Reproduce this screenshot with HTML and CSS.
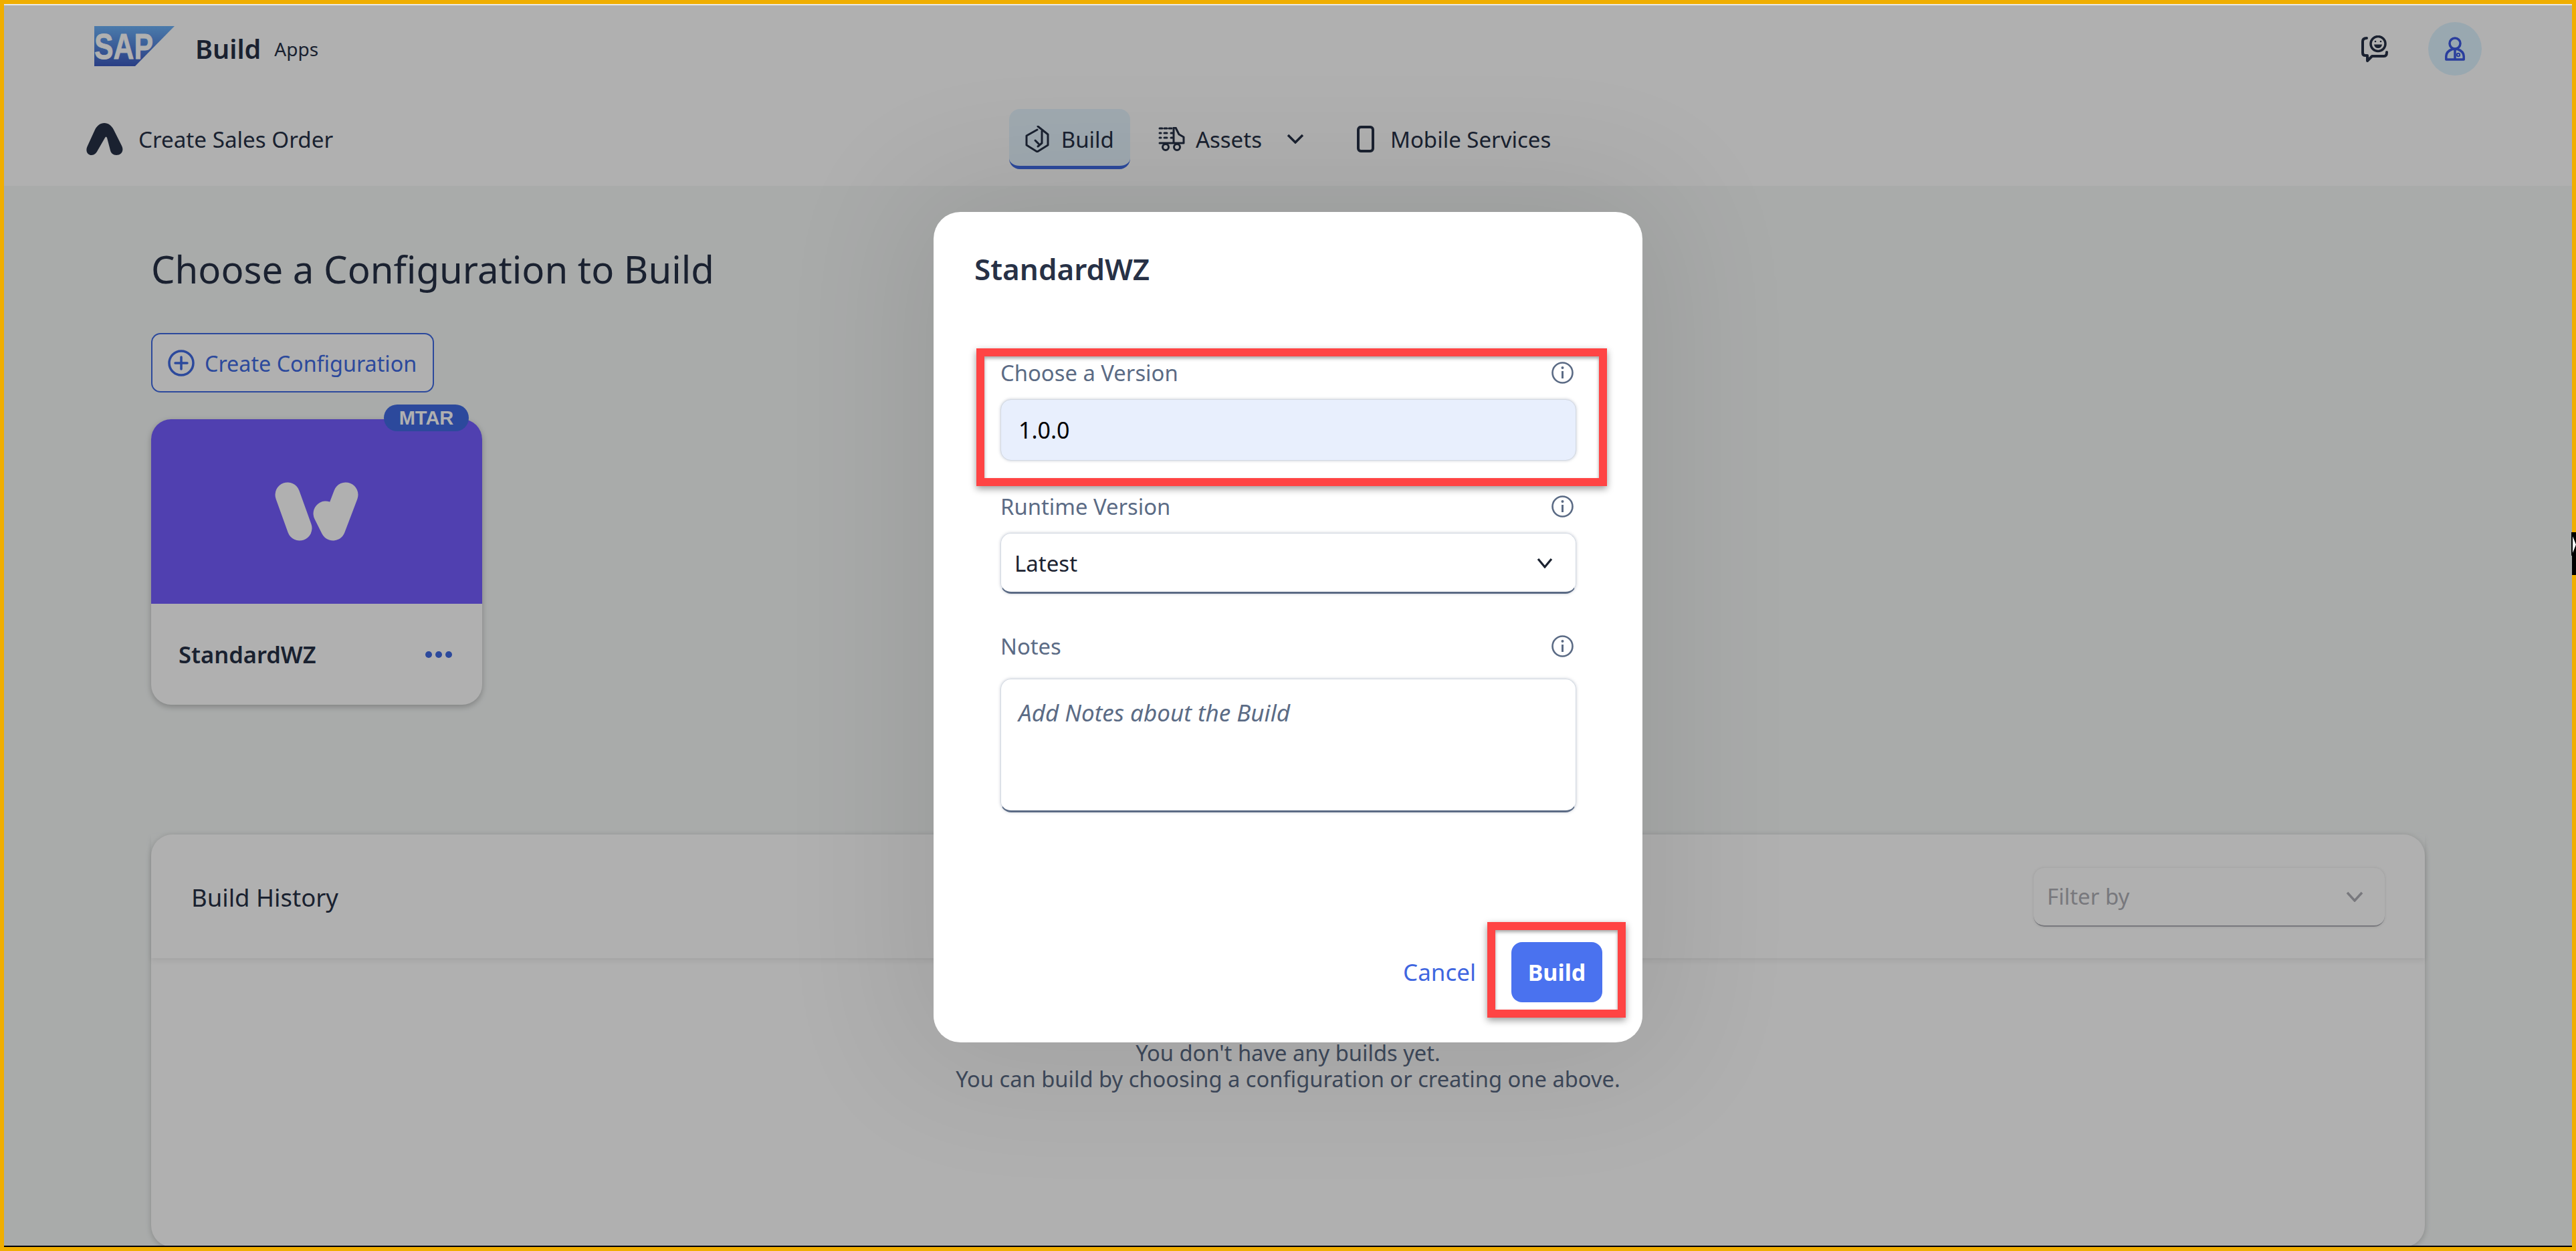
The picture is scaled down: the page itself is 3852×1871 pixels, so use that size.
FILE: index.html
```html
<!DOCTYPE html>
<html lang="en">
<head>
<meta charset="utf-8">
<title>SAP Build Apps</title>
<link rel="stylesheet" href="styles.css">
</head>
<body>
<div class="frame">
  <div class="topline"></div>
  <main class="app">
    <header class="header">
      <div class="topbar">
        <div class="brand">
          <svg class="sap-logo" viewBox="0 0 120 60">
            <defs><linearGradient id="sapg" x1="0" y1="0" x2="0" y2="1"><stop offset="0" stop-color="#6db2f8"/><stop offset="1" stop-color="#3d5bc1"/></linearGradient></defs>
            <polygon points="0,0 120,0 61,60 0,60" fill="url(#sapg)"/>
            <text class="sap-text" x="0" y="49" textLength="88" lengthAdjust="spacingAndGlyphs">SAP</text>
          </svg>
          <span class="brand-build">Build</span>
          <span class="brand-apps">Apps</span>
        </div>
        <div class="actions">
          <svg class="icon-feedback" viewBox="0 0 40 40" fill="none" stroke="#273146" stroke-width="4" stroke-linecap="round" stroke-linejoin="round">
            <path d="M8 4 Q2 4 2 9 V26 Q2 30 6 30 H9 V38 L16 31 H34 Q38 31 38 25"/>
            <circle cx="25" cy="12.500" r="11" stroke-width="3.500"/>
            <path d="M19 13.500 H31 Q30 19 25 19 Q20 19 19 13.500Z" fill="#273146" stroke="none"/>
            <circle cx="21" cy="9" r="1.300" fill="#273146" stroke="none"/>
            <circle cx="29" cy="9" r="1.300" fill="#273146" stroke="none"/>
          </svg>
          <div class="avatar">
            <svg class="icon-user" viewBox="0 0 30 36" fill="none" stroke="#3d5be4" stroke-width="3.500" stroke-linejoin="round">
              <circle cx="15" cy="10" r="8"/>
              <path d="M1.800 34 V29 Q2 22 11 18.500 H19 Q28 22 28.200 29 V34Z"/>
              <path d="M15 17 V34"/>
              <circle cx="20" cy="27" r="2.200" stroke-width="2"/>
            </svg>
          </div>
        </div>
      </div>
      <div class="subbar">
        <div class="app-name">
          <svg class="icon-a" viewBox="0 0 55 48"><path d="M27 0 C33 0 38 4 41 10 L53 34 C57 42 52 48 45 48 C40 48 37 45 36 41 L31 22 Q29.500 19 28 22 L17 41 C15 45 12 48 8 48 C2 48 -2 42 2 34 L13 10 C16 4 21 0 27 0Z" fill="#273146"/></svg>
          <span>Create Sales Order</span>
        </div>
        <nav class="nav">
          <div class="nav-item nav-active">
            <svg class="icon-build" viewBox="0 0 38 40" fill="none" stroke="#273146" stroke-width="3" stroke-linecap="round" stroke-linejoin="round">
              <path d="M18 6 L2 15 V29 L18 39 L34 29 V13 L19 1"/>
              <path d="M25 8 V26 L19 31"/>
              <path d="M15 22 L20 27" stroke-width="3"/>
            </svg>
            <span>Build</span>
          </div>
          <div class="nav-item">
            <svg class="icon-assets" viewBox="0 0 40 36" fill="none" stroke="#273146" stroke-width="3" stroke-linecap="round" stroke-linejoin="round">
              <path d="M2 2 H22 M2 9 H4 M9 9 H14 M19 9 H22 M2 16 H4 M9 16 H14 M19 16 H22" stroke-dasharray="4 3"/>
              <path d="M2 24 H38 V15 L31 11 L26 1 H23 V24"/>
              <circle cx="11" cy="30" r="4.500"/>
              <circle cx="28" cy="30" r="4.500"/>
            </svg>
            <span>Assets</span>
            <svg class="icon-nav-chevron" viewBox="0 0 26 14" fill="none" stroke="#273146" stroke-width="3.500"><path d="M2 1 L13 12 L24 1"/></svg>
          </div>
          <div class="nav-item">
            <svg class="icon-mobile" viewBox="0 0 26 40" fill="none" stroke="#273146" stroke-width="4"><rect x="2" y="2" width="22" height="36" rx="4"/></svg>
            <span>Mobile Services</span>
          </div>
        </nav>
        <div></div>
      </div>
    </header>

    <section class="content">
      <h1 class="page-title">Choose a Configuration to Build</h1>
      <div class="create-btn">
        <svg class="icon-plus" viewBox="0 0 40 40" fill="none" stroke="#406be2" stroke-width="3.500" stroke-linecap="round"><circle cx="20" cy="20" r="18"/><path d="M20 11 V29 M11 20 H29"/></svg>
        <span>Create Configuration</span>
      </div>
      <article class="card">
        <span class="badge">MTAR</span>
        <div class="card-img">
          <svg class="icon-w" viewBox="0 0 126 88" fill="none" stroke="#fff" stroke-width="37" stroke-linecap="round" stroke-linejoin="round">
            <path d="M19 19 L37 69"/>
            <path d="M76 47 L87 69 L106 19"/>
          </svg>
        </div>
        <div class="card-foot">
          <span class="card-name">StandardWZ</span>
          <span class="dots"><i></i><i></i><i></i></span>
        </div>
      </article>
      <section class="history">
        <div class="history-head">
          <h2 class="history-title">Build History</h2>
          <div class="filter">
            <span>Filter by</span>
            <svg class="icon-chevron" viewBox="0 0 26 16" fill="none" stroke="#aeafb5" stroke-width="3.500"><path d="M2 2 L13 14 L24 2"/></svg>
          </div>
        </div>
        <div class="history-body">
          <p>You don't have any builds yet.</p>
          <p>You can build by choosing a configuration or creating one above.</p>
        </div>
      </section>
    </section>

    <div class="overlay">
      <div class="dialog">
        <h2 class="dialog-title">StandardWZ</h2>
        <div class="form">
          <div class="field">
            <div class="label-row"><label>Choose a Version</label>
              <svg class="icon-info" viewBox="0 0 33 33" fill="none" stroke="#5b6b85" stroke-width="2.600"><circle cx="16.500" cy="16.500" r="15"/><path d="M16.500 14 V25" stroke-width="3"/><circle cx="16.500" cy="9" r="2" fill="#5b6b85" stroke="none"/></svg>
            </div>
            <div class="control control-filled">1.0.0</div>
          </div>
          <div class="field">
            <div class="label-row"><label>Runtime Version</label>
              <svg class="icon-info" viewBox="0 0 33 33" fill="none" stroke="#5b6b85" stroke-width="2.600"><circle cx="16.500" cy="16.500" r="15"/><path d="M16.500 14 V25" stroke-width="3"/><circle cx="16.500" cy="9" r="2" fill="#5b6b85" stroke="none"/></svg>
            </div>
            <div class="control control-select"><span>Latest</span>
              <svg class="icon-select" viewBox="0 0 24 16" fill="none" stroke="#1b2230" stroke-width="3.200"><path d="M2 2 L12 14 L22 2"/></svg>
            </div>
          </div>
          <div class="field field-notes">
            <div class="label-row"><label>Notes</label>
              <svg class="icon-info" viewBox="0 0 33 33" fill="none" stroke="#5b6b85" stroke-width="2.600"><circle cx="16.500" cy="16.500" r="15"/><path d="M16.500 14 V25" stroke-width="3"/><circle cx="16.500" cy="9" r="2" fill="#5b6b85" stroke="none"/></svg>
            </div>
            <div class="control control-area">Add Notes about the Build</div>
          </div>
        </div>
        <div class="dialog-foot">
          <span class="cancel">Cancel</span>
          <span class="primary">Build</span>
        </div>
        <div class="mark mark-version"></div>
        <div class="mark mark-build"></div>
      </div>
    </div>
  </main>
  <div class="bottomline"></div>
  <div class="cursor"><span class="cursor-arrow"></span></div>
</div>
</body>
</html>
```

FILE: styles.css
```css
* { box-sizing: border-box; }
html, body { margin: 0; padding: 0; }
body { font-family: "Noto Sans", "Open Sans", sans-serif; color: #273146; background: #fff; }

.frame {
  position: relative;
  width: 3852px;
  height: 1871px;
  border: 6px solid #f0ae00;
  display: flex;
  flex-direction: column;
}
.topline { height: 2px; background: #e8e8e8; flex: none; }
.bottomline { height: 2px; background: #000; flex: none; }
.app { position: relative; flex: 1; overflow: hidden; background: #f5f8f7; min-height: 0; }

/* header */
.header { background: #fff; height: 270px; }
.topbar {
  height: 105px;
  padding: 25px 135px 0;
  display: flex;
  justify-content: space-between;
  align-items: flex-start;
}
.brand { display: flex; align-items: center; height: 80px; }
.sap-logo { width: 120px; height: 60px; margin: 0 31px 8px 0; }
.sap-text { font-family: "Liberation Sans", sans-serif; font-size: 53px; font-weight: 700; fill: #fff; stroke: #fff; stroke-width: .8px; }
.brand-build { font-size: 39.500px; font-weight: 600; margin-right: 20px; }
.brand-apps { font-size: 28px; }
.actions { display: flex; align-items: center; gap: 60px; }
.icon-feedback { width: 40px; height: 40px; margin-top: 0; }
.avatar { width: 80px; height: 80px; border-radius: 50%; background: #def3ff; display: flex; align-items: center; justify-content: center; }
.icon-user { width: 30px; height: 36px; }

.subbar {
  padding: 50px 123px 0;
  display: grid;
  grid-template-columns: 1fr auto 1fr;
  align-items: start;
}
.app-name { display: flex; align-items: center; gap: 23px; height: 90px; font-size: 33.200px; }
.icon-a { width: 55px; height: 48px; }
.nav { display: flex; gap: 18px; font-size: 33px; }
.nav-item { display: flex; align-items: center; gap: 16px; height: 90px; padding: 0 24px; border-radius: 16px; }
.nav-active { background: #e6f5ff; border-bottom: 5px solid #406be2; padding-top: 5px; }
.icon-build { width: 38px; height: 40px; }
.icon-assets { width: 40px; height: 36px; }
.icon-nav-chevron { width: 26px; height: 14px; margin: 0 13px 0 21px; }
.icon-mobile { width: 26px; height: 40px; margin-right: 8px; }

/* content */
.content { padding: 86px 220px 0; }
.page-title { margin: 0; font-size: 56.300px; line-height: 76px; font-weight: 400; }
.create-btn {
  margin-top: 58px;
  width: 423px;
  height: 89px;
  padding-left: 23px;
  display: flex;
  align-items: center;
  gap: 15px;
  border: 2px solid #406be2;
  border-radius: 14px;
  background: #fff;
  color: #406be2;
  font-size: 32.300px;
  white-space: nowrap;
}
.icon-plus { width: 40px; height: 40px; flex: none; }

.card {
  position: relative;
  margin-top: 40px;
  width: 495px;
  height: 427px;
  border-radius: 30px;
  background: #fff;
  box-shadow: 0 3px 10px rgba(0,0,0,.25);
}
.badge {
  position: absolute;
  top: -22px;
  right: 20px;
  width: 127px;
  height: 40px;
  border-radius: 20px;
  background: #406be2;
  color: #fff;
  font-family: "Liberation Sans", sans-serif;
  font-size: 29px;
  font-weight: 700;
  line-height: 40px;
  text-align: center;
}
.card-img {
  height: 276px;
  border-radius: 30px 30px 0 0;
  background: #745dff;
  display: flex;
  align-items: center;
  justify-content: center;
}
.icon-w { width: 126px; height: 88px; }
.card-foot { height: 151px; padding: 0 45px 0 41px; display: flex; align-items: center; justify-content: space-between; }
.card-name { font-size: 34.500px; font-weight: 600; }
.dots { display: flex; gap: 5px; }
.dots i { width: 10px; height: 10px; border-radius: 50%; background: #406be2; }

.history {
  margin-top: 194px;
  height: 617px;
  border-radius: 32px;
  background: #fff;
  box-shadow: 0 2px 10px rgba(0,0,0,.2);
}
.history-head {
  height: 185px;
  padding: 2px 60px 0;
  display: flex;
  align-items: center;
  justify-content: space-between;
  box-shadow: 0 4px 8px rgba(0,0,0,.07);
}
.history-title { margin: 0; font-size: 36.500px; font-weight: 400; }
.filter {
  width: 525px;
  height: 88px;
  padding: 0 32px 0 20px;
  display: flex;
  align-items: center;
  justify-content: space-between;
  border-radius: 16px;
  border-bottom: 2px solid #aeafb5;
  box-shadow: 0 0 4px rgba(0,0,0,.12);
  color: #aeafb5;
  font-size: 33px;
}
.icon-chevron { width: 26px; height: 16px; }
.history-body { padding-top: 122px; text-align: center; color: #5b6b85; font-size: 32.700px; line-height: 39px; }
.history-body p { margin: 0; }

/* dialog */
.overlay {
  position: absolute;
  inset: 0;
  background: rgba(0,0,0,.31);
  display: flex;
  align-items: center;
  justify-content: center;
}
.dialog {
  position: relative;
  width: 1060px;
  height: 1242px;
  margin-top: 4px;
  padding: 57px 60px 60px;
  border-radius: 40px;
  background: #fff;
  box-shadow: 0 0 200px 40px rgba(0,0,0,.09);
  display: flex;
  flex-direction: column;
}
.dialog-title { margin: 0 0 106px 1px; font-size: 44px; line-height: 56px; font-weight: 600; }
.form { padding: 0 39px 0 40px; display: flex; flex-direction: column; gap: 47px; }
.label-row { height: 44px; margin-bottom: 17px; padding-right: 4px; display: flex; align-items: center; justify-content: space-between; color: #5b6b85; font-size: 32.800px; }
.icon-info { width: 33px; height: 33px; }
.field-notes { margin-top: 10px; }
.field-notes .label-row { margin-bottom: 26px; }
.control {
  border-radius: 16px;
  border: 1px solid #d3d9e2;
  box-shadow: 0 0 4px rgba(91,107,133,.35);
  font-size: 33px;
  display: flex;
  align-items: center;
  justify-content: space-between;
}
.control-filled { height: 92px; padding: 0 26px; background: #e8effd; color: #000; font-size: 34px; }
.control-select { height: 91px; padding: 2px 34px 0 20px; color: #1b2230; border-bottom: 3px solid #5b6b85; }
.icon-select { width: 24px; height: 16px; }
.control-area { height: 200px; padding: 26px 26px; align-items: flex-start; font-style: italic; font-size: 35px; color: #5b6b85; border-bottom: 3px solid #5b6b85; }
.dialog-foot { margin-top: auto; display: flex; align-items: center; justify-content: flex-end; gap: 53px; font-size: 35px; }
.cancel { color: #3f66e0; }
.primary {
  width: 136px;
  height: 90px;
  border-radius: 16px;
  background: #4a72ef;
  color: #fff;
  font-size: 34px;
  font-weight: 700;
  line-height: 90px;
  text-align: center;
}
.mark {
  position: absolute;
  border: 12px solid #ff4444;
  box-shadow: 0 4px 10px rgba(0,0,0,.4), inset 0 3px 5px rgba(0,0,0,.35);
}
.mark-version { left: 64px; top: 204px; width: 943px; height: 206px; }
.mark-build { left: 828px; top: 1062px; width: 207px; height: 143px; }

/* captured mouse cursor on the window edge */
.cursor { position: absolute; top: 790px; right: -6px; width: 6px; height: 64px; background: #000; }
.cursor::before { content: ""; position: absolute; top: 0; left: -1px; width: 1px; height: 35px; background: #000; }
.cursor-arrow { position: absolute; top: 6px; left: 1px; width: 5px; height: 25px; background: #fff; clip-path: polygon(0 0, 100% 50%, 0 100%); }
```
